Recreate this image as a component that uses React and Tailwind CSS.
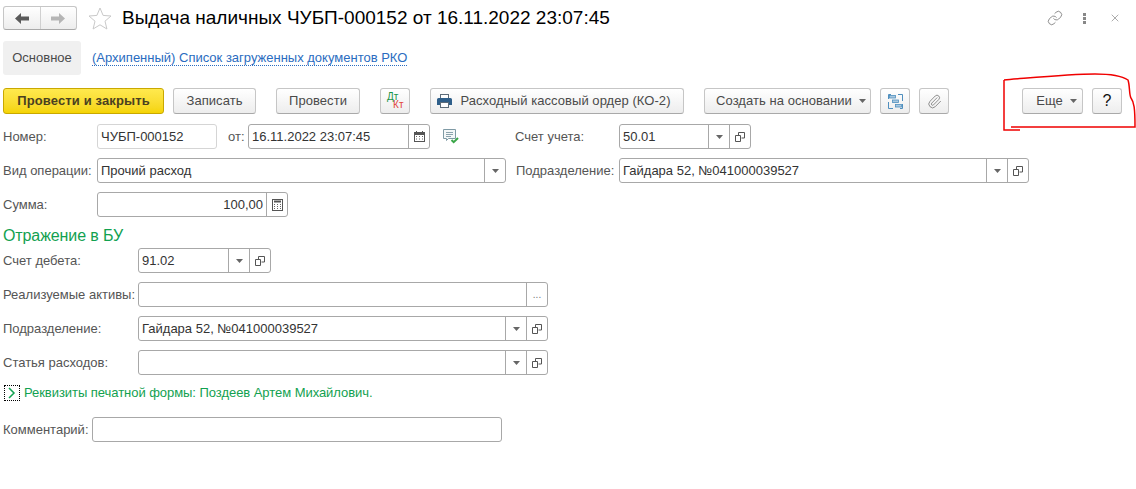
import React from 'react';
import { Link as LinkIcon, X, Paperclip } from 'lucide-react';

const btn = 'h-[26px] flex items-center justify-center rounded-[3px] border border-[#c6c6c6] border-b-[#a9a9a9] bg-linear-to-b from-white to-[#ededed] text-[13px] tracking-[0.05px] text-[#4a4a4a] shrink-0';
const label = 'text-[13px] text-[#555] whitespace-nowrap shrink-0';

function Caret() {
    return (
        <svg width="7" height="4" viewBox="0 0 7 4" className="shrink-0">
            <path d="M0 0h7L3.5 4z" fill="#666" />
        </svg>
    );
}

function OpenIcon() {
    return (
        <svg width="10" height="10" viewBox="0 0 10 10" fill="none" stroke="#555" strokeWidth="1">
            <path d="M3.5 3V.5h6v5.5H6.5" />
            <path d="M.5 3.5h5v6h-5z" fill="white" />
        </svg>
    );
}

function Side({ children }) {
    return <div className="w-[21px] self-stretch shrink-0 border-l border-[#a8a8a8] flex items-center justify-center">{children}</div>;
}

function Field({ className, text, right, light, children }) {
    return (
        <div className={`h-[25px] flex items-stretch rounded-[3px] border bg-white shrink-0 ${light ? 'border-[#d5d5d5]' : 'border-[#a8a8a8]'} ${className}`}>
            <div className={`flex-1 min-w-0 flex items-center px-[3px] text-[13px] text-[#333] ${right ? 'justify-end' : ''}`}>{text}</div>
            {children}
        </div>
    );
}

function CalendarIcon() {
    return (
        <svg width="11" height="11" viewBox="0 0 11 11" fill="none">
            <rect x="0.5" y="1.5" width="10" height="9" stroke="#555" />
            <rect x="0.5" y="1.5" width="10" height="2.5" fill="#555" />
            <path d="M2.5 0v2M8.5 0v2" stroke="#555" />
            <path d="M2 5.5h1M5 5.5h1M8 5.5h1M2 8h1M5 8h1M8 8h1" stroke="#666" />
        </svg>
    );
}

function CalcIcon() {
    return (
        <svg width="11" height="12" viewBox="0 0 11 12" fill="none">
            <rect x="0.5" y="0.5" width="10" height="11" stroke="#555" />
            <path d="M2 2.5h7" stroke="#555" strokeWidth="2" />
            <path d="M2 5.5h1M5 5.5h1M8 5.5h1M2 7.5h1M5 7.5h1M8 7.5h1M2 9.5h1M5 9.5h1M8 9.5h1" stroke="#666" />
        </svg>
    );
}

function DocCheckIcon() {
    return (
        <svg width="16" height="15" viewBox="0 0 16 15" fill="none" className="shrink-0">
            <path d="M.5.5h12v9h-7l-2 2v-2h-3z" stroke="#7f9aa5" fill="#f4f7f8" />
            <path d="M3 3.5h7M3 5.5h7M3 7.5h5" stroke="#8aa2ac" />
            <path d="M8.5 11l2.2 2.2L15 9" stroke="#3aa648" strokeWidth="2" />
        </svg>
    );
}

function PrinterIcon() {
    return (
        <svg width="15" height="14" viewBox="0 0 15 14" className="shrink-0">
            <rect x="3.5" y="0.5" width="8" height="5" fill="white" stroke="#5d6c7a" />
            <path d="M1.5 4h12A1.5 1.5 0 0 1 15 5.5V11h-3V8.5H3V11H0V5.5A1.5 1.5 0 0 1 1.5 4z" fill="#2f5f8a" />
            <rect x="3.5" y="8.5" width="8" height="5" fill="white" stroke="#5d6c7a" />
        </svg>
    );
}

function StructureIcon() {
    return (
        <svg width="15" height="15" viewBox="0 0 15 15" fill="none">
            <path d="M.5 5V.5h2.5M14.5 10v4.5H12M.5 8v6.5H5M14.5 7V.5H10" stroke="#4f8fbe" />
            <rect x="1.5" y="1.5" width="6" height="2.5" fill="#a9c8e0" stroke="#4f8fbe" strokeWidth="0.8" />
            <rect x="4.5" y="6" width="6" height="2.5" fill="#a9c8e0" stroke="#4f8fbe" strokeWidth="0.8" />
            <rect x="7.5" y="10.5" width="6" height="2.5" fill="#a9c8e0" stroke="#4f8fbe" strokeWidth="0.8" />
        </svg>
    );
}

export default function App() {
    return (
        <div className="relative w-[1136px] h-[489px] overflow-hidden bg-white pl-[3px] font-['Liberation_Sans',Arial,sans-serif]">
            {/* Header */}
            <div className="flex items-center pt-[6px] h-[30px]">
                <div className="w-[74px] h-[24px] flex rounded-[3px] border border-[#c6c6c6] border-b-[#a9a9a9] bg-linear-to-b from-white to-[#ededed]">
                    <div className="flex-1 flex items-center justify-center border-r border-[#d0d0d0]">
                        <svg width="14" height="11" viewBox="0 0 14 11"><path d="M6 0v3.5h8v4H6V11L0 5.5z" fill="#5a5a5a" /></svg>
                    </div>
                    <div className="flex-1 flex items-center justify-center">
                        <svg width="14" height="11" viewBox="0 0 14 11"><path d="M8 0v3.5H0v4h8V11l6-5.5z" fill="#b5b5b5" /></svg>
                    </div>
                </div>
                <svg width="24" height="23" viewBox="0 0 24 23" fill="none" className="ml-[11px]">
                    <path d="M12 1l3.1 7.4 7.9.6-6 5.2 1.9 7.8-6.9-4.2-6.9 4.2L7 14.2 1 9l7.9-.6z" stroke="#c9c9c9" />
                </svg>
                <h1 className="ml-[10px] text-[19px] text-black whitespace-nowrap">Выдача наличных ЧУБП-000152 от 16.11.2022 23:07:45</h1>
                <div className="ml-auto flex items-center text-[#666]">
                    <LinkIcon size={16} strokeWidth={1.1} />
                    <div className="ml-[20px] flex flex-col gap-[1px]">
                        <span className="w-[3px] h-[3px] bg-[#888]" />
                        <span className="w-[3px] h-[3px] bg-[#888]" />
                        <span className="w-[3px] h-[3px] bg-[#888]" />
                    </div>
                    <X size={12} strokeWidth={1.1} className="ml-[23px] mr-[15px]" />
                </div>
            </div>

            {/* Tabs */}
            <div className="flex items-center mt-[11px]">
                <div className="w-[78px] h-[34px] flex items-center justify-center rounded-[3px] bg-[#f0f0f0] text-[13px] text-[#4a4a4a]">Основное</div>
                <a className="ml-[11px] text-[13px] text-[#2a6cc0] border-b border-dotted border-[#2a6cc0] leading-[14px]">(Архипенный) Список загруженных документов РКО</a>
            </div>

            {/* Toolbar */}
            <div className="flex items-center mt-[13px]">
                <div className={`${btn} w-[161px] !border-[#c9a800] !from-[#ffe94d] !to-[#f5d400] font-bold !text-[#4a4020] !tracking-[0.13px]`}>Провести и закрыть</div>
                <div className={`${btn} w-[83px] ml-[9px]`}>Записать</div>
                <div className={`${btn} w-[84px] ml-[20px]`}>Провести</div>
                <div className={`${btn} w-[30px] ml-[20px] relative`}>
                    <span className="absolute left-[6px] top-[4px] text-[10px] leading-[8px] font-medium text-[#1a9447]">Дт</span>
                    <span className="absolute left-[12px] top-[12px] text-[10px] leading-[8px] font-medium text-[#e2453c]">Кт</span>
                </div>
                <div className={`${btn} w-[254px] ml-[20px] gap-[8px] pr-[6px]`}><PrinterIcon />Расходный кассовый ордер (КО-2)</div>
                <div className={`${btn} w-[167px] ml-[20px] gap-[7px] pl-[7px]`}>Создать на основании <Caret /></div>
                <div className={`${btn} w-[30px] ml-[9px]`}><StructureIcon /></div>
                <div className={`${btn} w-[30px] ml-[9px]`}><Paperclip size={15} strokeWidth={1.3} className="text-[#777]" /></div>
                <div className={`${btn} w-[61px] ml-[73px] gap-[7px] pl-[8px]`}>Еще <Caret /></div>
                <div className={`${btn} w-[30px] ml-[9px] text-[16px] !text-[#111]`}>?</div>
            </div>

            {/* Form */}
            <div className="flex items-center mt-[10px]">
                <span className={`${label} w-[94px]`}>Номер:</span>
                <Field className="w-[120px]" text="ЧУБП-000152" light />
                <span className={`${label} ml-[11px] w-[20px]`}>от:</span>
                <Field className="w-[182px]" text="16.11.2022 23:07:45"><Side><CalendarIcon /></Side></Field>
                <div className="ml-[13px]"><DocCheckIcon /></div>
                <span className={`${label} ml-[56px] w-[104px]`}>Счет учета:</span>
                <Field className="w-[132px]" text="50.01"><Side><Caret /></Side><Side><OpenIcon /></Side></Field>
            </div>
            <div className="flex items-center mt-[9px]">
                <span className={`${label} w-[94px]`}>Вид операции:</span>
                <Field className="w-[409px]" text="Прочий расход"><Side><Caret /></Side></Field>
                <span className={`${label} ml-[10px] w-[103px]`}>Подразделение:</span>
                <Field className="w-[410px]" text="Гайдара 52, №041000039527"><Side><Caret /></Side><Side><OpenIcon /></Side></Field>
            </div>
            <div className="flex items-center mt-[9px]">
                <span className={`${label} w-[94px]`}>Сумма:</span>
                <Field className="w-[191px]" text="100,00" right><Side><CalcIcon /></Side></Field>
            </div>

            <h2 className="mt-[9px] text-[16px] leading-[20px] tracking-[-0.1px] text-[#12a150]">Отражение в БУ</h2>

            <div className="flex items-center mt-[2px]">
                <span className={`${label} w-[135px]`}>Счет дебета:</span>
                <Field className="w-[133px]" text="91.02"><Side><Caret /></Side><Side><OpenIcon /></Side></Field>
            </div>
            <div className="flex items-center mt-[9px]">
                <span className={`${label} w-[135px]`}>Реализуемые активы:</span>
                <Field className="w-[410px]" text=""><Side><span className="text-[10px] text-[#777] leading-none">...</span></Side></Field>
            </div>
            <div className="flex items-center mt-[9px]">
                <span className={`${label} w-[135px]`}>Подразделение:</span>
                <Field className="w-[410px]" text="Гайдара 52, №041000039527"><Side><Caret /></Side><Side><OpenIcon /></Side></Field>
            </div>
            <div className="flex items-center mt-[9px]">
                <span className={`${label} w-[135px]`}>Статья расходов:</span>
                <Field className="w-[410px]" text=""><Side><Caret /></Side><Side><OpenIcon /></Side></Field>
            </div>

            <div className="flex items-center mt-[9px] h-[18px]">
                <div className="w-[16px] h-[16px] ml-[1px] border border-dotted border-black flex items-center justify-center">
                    <svg width="8" height="12" viewBox="0 0 8 12" fill="none"><path d="M1 1l5 5-5 5" stroke="#12a150" strokeWidth="1.5" /></svg>
                </div>
                <span className="ml-[4px] text-[13px] tracking-[-0.05px] text-[#12a150] whitespace-nowrap">Реквизиты печатной формы: Поздеев Артем Михайлович.</span>
            </div>

            <div className="flex items-center mt-[15px]">
                <span className={`${label} w-[89px]`}>Комментарий:</span>
                <Field className="w-[410px]" text="" />
            </div>

            {/* Red freehand mark */}
            <svg width="136" height="62" viewBox="0 0 136 62" fill="none" className="absolute left-[1000px] top-[70px]">
                <path d="M4 10C30 8 70 4 95 4c15 0 27 2 33 6 2 6 1 15 3 18 3 4 4 10 4 29H11M4 10v50h16" stroke="#f00000" strokeWidth="1.5" />
            </svg>
        </div>
    );
}
